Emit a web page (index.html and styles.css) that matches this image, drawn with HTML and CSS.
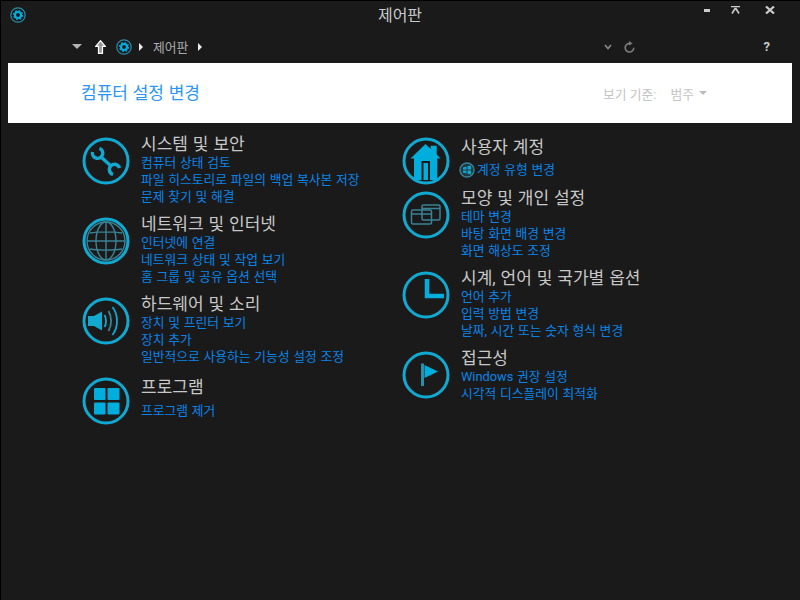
FILE: index.html
```html
<!DOCTYPE html>
<html lang="ko">
<head>
    <meta charset="UTF-8">
    <meta name="viewport" content="width=device-width, initial-scale=1.0">
    <title>제어판</title>
    <link rel="stylesheet" href="styles.css">
</head>
<body>
    <svg class="defs" width="0" height="0">
        <symbol id="gear" viewBox="0 0 16 16">
            <circle cx="8" cy="8" r="7.2" fill="none" stroke="#2a8fa8" stroke-width="1.2"/>
            <circle cx="8" cy="8" r="3" fill="none" stroke="#00aee0" stroke-width="2.2"/>
            <circle cx="8" cy="8" r="4.4" fill="none" stroke="#00aee0" stroke-width="1.4" stroke-dasharray="1.7 1.75"/>
        </symbol>
    </svg>

    <header class="titlebar">
        <svg class="app-icon"><use href="#gear"/></svg>
        <span class="titlebar-text">제어판</span>
        <div class="win-btns">
            <svg class="btn-min" width="6" height="3"><rect width="6" height="3" fill="#ccc"/></svg>
            <svg class="btn-max" width="9" height="8" viewBox="0 0 9 8"><path d="M0 .5h9M4.5 2 1 7.5M4.5 2 8 7.5" stroke="#ccc" stroke-width="1.6" fill="none"/></svg>
            <svg class="btn-close" width="10" height="8" viewBox="0 0 10 8"><path d="M1 .5 9 7.5M9 .5 1 7.5" stroke="#ccc" stroke-width="2.2" fill="none"/></svg>
        </div>
    </header>

    <nav class="navbar">
        <span class="caret-down"></span>
        <svg class="up-arrow" width="11" height="14" viewBox="0 0 11 14"><path d="M5.5 .7 10.3 6.3H7.5V13.3H3.5V6.3H.7Z" fill="#999" stroke="#fff" stroke-width="1.2"/></svg>
        <svg class="crumb-icon"><use href="#gear"/></svg>
        <span class="crumb-arrow"></span>
        <span class="crumb-text">제어판</span>
        <span class="crumb-arrow"></span>
        <div class="nav-right">
            <svg width="8" height="6" viewBox="0 0 8 6"><path d="M1 1 4 4.5 7 1" stroke="#8a8a8a" stroke-width="1.6" fill="none"/></svg>
            <svg class="refresh" width="11" height="12" viewBox="0 0 11 12"><path d="M6.8 2.6A4.3 4.3 0 1 0 9.8 6.8" stroke="#7c7c7c" stroke-width="1.6" fill="none"/><path d="M5 0 8.6 2.4 5 4.6Z" fill="#7c7c7c"/></svg>
            <span class="help">?</span>
        </div>
    </nav>

    <section class="banner">
        <h1>컴퓨터 설정 변경</h1>
        <div class="view-by">
            <span>보기 기준:</span>
            <span class="view-value">범주</span>
            <span class="caret-view"></span>
        </div>
    </section>

    <main class="panel">
        <div class="col">
            <div class="item">
                <svg class="ring" viewBox="0 0 48 48">
                    <circle class="ring-line" cx="24" cy="24" r="22"/>
                    <g fill="none" stroke="#12a9d0" stroke-width="3.4">
                        <path d="M10.500 15A5.200 5.200 0 1 0 17.500 11.300"/>
                        <path d="M19 20 29 29"/>
                        <path d="M37.500 31A5.200 5.200 0 1 0 31 37.500"/>
                    </g>
                </svg>
                <div class="item-body">
                    <h2>시스템 및 보안</h2>
                    <a>컴퓨터 상태 검토</a>
                    <a>파일 히스토리로 파일의 백업 복사본 저장</a>
                    <a>문제 찾기 및 해결</a>
                </div>
            </div>
            <div class="item">
                <svg class="ring" viewBox="0 0 48 48">
                    <circle class="ring-line" cx="24" cy="24" r="22"/>
                    <g fill="none" stroke="#3a8296" stroke-width="1.4">
                        <circle cx="24" cy="24" r="19"/>
                        <ellipse cx="24" cy="24" rx="10" ry="19"/>
                        <path d="M24 5V43M5 24H43M8 16C16 14.500 32 14.500 40 16M8 32C16 33.500 32 33.500 40 32"/>
                    </g>
                </svg>
                <div class="item-body">
                    <h2>네트워크 및 인터넷</h2>
                    <a>인터넷에 연결</a>
                    <a>네트워크 상태 및 작업 보기</a>
                    <a>홈 그룹 및 공유 옵션 선택</a>
                </div>
            </div>
            <div class="item">
                <svg class="ring" viewBox="0 0 48 48">
                    <circle class="ring-line" cx="24" cy="24" r="22"/>
                    <path d="M6 19H12L20 14.500V33.500L12 29H6Z" fill="#12a9d0"/>
                    <g fill="none" stroke-width="1.8">
                        <path d="M22.500 18C24.500 21 24.500 27 22.500 30" stroke="#12a9d0"/>
                        <path d="M26.500 14C30 20 30 28 26.500 34" stroke="#3a8296"/>
                        <path d="M30.500 10C36.500 18 36.500 30 30.500 38" stroke="#12a9d0"/>
                    </g>
                </svg>
                <div class="item-body">
                    <h2>하드웨어 및 소리</h2>
                    <a>장치 및 프린터 보기</a>
                    <a>장치 추가</a>
                    <a>일반적으로 사용하는 기능성 설정 조정</a>
                </div>
            </div>
            <div class="item item-single">
                <svg class="ring" viewBox="0 0 48 48">
                    <circle class="ring-line" cx="24" cy="24" r="22"/>
                    <g fill="#00aedd">
                        <rect x="12" y="11" width="11.500" height="12" rx="1"/>
                        <rect x="25.500" y="11" width="12" height="12" rx="1"/>
                        <rect x="12" y="25.500" width="11.500" height="12" rx="1"/>
                        <rect x="25.500" y="25.500" width="12" height="12" rx="1"/>
                    </g>
                </svg>
                <div class="item-body">
                    <h2>프로그램</h2>
                    <a>프로그램 제거</a>
                </div>
            </div>
        </div>

        <div class="col">
            <div class="item item-single item-short">
                <svg class="ring" viewBox="0 0 48 48">
                    <circle class="ring-line" cx="24" cy="24" r="22"/>
                    <path fill-rule="evenodd" fill="#00aedd" d="M23.500 7 28.700 12V8.700H34.700V17.500L38.500 21.500H35.300V43H12V21.500H8.500ZM19.500 24V43H28V24Z"/>
                    <rect x="21.500" y="26" width="4.500" height="17" fill="#00aedd"/>
                </svg>
                <div class="item-body">
                    <h2>사용자 계정</h2>
                    <a class="link-shield">
                        <svg class="win-badge" width="16" height="16" viewBox="0 0 16 16">
                            <circle cx="8" cy="8" r="7" fill="#1d3a44" stroke="#3a8296" stroke-width="1.4"/>
                            <path d="M4 5.500 7.500 4.500V7.500H4ZM8.500 4.300 12 3.500V7.500H8.500ZM4 8.500H7.500V11.500L4 10.500ZM8.500 8.500H12V12.500L8.500 11.700Z" fill="#14a5cc"/>
                        </svg>계정 유형 변경
                    </a>
                </div>
            </div>
            <div class="item">
                <svg class="ring" viewBox="0 0 48 48">
                    <circle class="ring-line" cx="24" cy="24" r="22"/>
                    <g fill="none" stroke="#3a8296" stroke-width="1.5">
                        <rect x="20" y="14" width="18" height="15" rx="1.500"/>
                        <rect x="9.500" y="19" width="20" height="14" rx="1.500"/>
                        <path d="M9.500 23H29.500M20 17.500H38"/>
                    </g>
                </svg>
                <div class="item-body">
                    <h2>모양 및 개인 설정</h2>
                    <a>테마 변경</a>
                    <a>바탕 화면 배경 변경</a>
                    <a>화면 해상도 조정</a>
                </div>
            </div>
            <div class="item">
                <svg class="ring" viewBox="0 0 48 48">
                    <circle class="ring-line" cx="24" cy="24" r="22"/>
                    <path d="M25 8V25H42" fill="none" stroke="#00aedd" stroke-width="4.500"/>
                </svg>
                <div class="item-body">
                    <h2>시계, 언어 및 국가별 옵션</h2>
                    <a>언어 추가</a>
                    <a>입력 방법 변경</a>
                    <a>날짜, 시간 또는 숫자 형식 변경</a>
                </div>
            </div>
            <div class="item">
                <svg class="ring" viewBox="0 0 48 48">
                    <circle class="ring-line" cx="24" cy="24" r="22"/>
                    <rect x="19" y="12.500" width="3" height="22.500" fill="#2a8fa8"/>
                    <path d="M22.500 14 36 20.500 22.500 27Z" fill="#00aedd"/>
                </svg>
                <div class="item-body">
                    <h2>접근성</h2>
                    <a>Windows 권장 설정</a>
                    <a>시각적 디스플레이 최적화</a>
                </div>
            </div>
        </div>
    </main>
</body>
</html>
```
FILE: styles.css
```css
html, body {
    margin: 0;
    height: 100%;
}
body {
    background: #1a1a1a;
    box-shadow: inset 1px 1px 0 #000;
    font-family: Roboto, "Noto Sans CJK KR", sans-serif;
    overflow: hidden;
}
.defs { display: block; height: 0; }
.titlebar {
    height: 30px;
    padding-bottom: 3px;
    display: flex;
    align-items: center;
    justify-content: center;
    position: relative;
    box-sizing: border-box;
}
.app-icon {
    position: absolute;
    left: 10px;
    top: 7px;
    width: 16px;
    height: 16px;
}
.titlebar-text {
    color: #c8c8c8;
    font-size: 16px;
}
.win-btns {
    position: absolute;
    right: 0;
    top: 6px;
    display: flex;
    align-items: flex-start;
}
.btn-min { margin: 3px 0 0 0; }
.btn-max { margin: 0 0 0 21px; }
.btn-close { margin: 0 25px 0 25px; }

.navbar {
    height: 33px;
    display: flex;
    align-items: center;
    padding-left: 72px;
    padding-right: 30px;
}
.caret-down {
    border-left: 5px solid transparent;
    border-right: 5px solid transparent;
    border-top: 5px solid #b4b4b4;
}
.up-arrow { margin-left: 13px; }
.crumb-icon {
    width: 16px;
    height: 16px;
    margin-left: 10px;
}
.crumb-arrow {
    border-top: 4px solid transparent;
    border-bottom: 4px solid transparent;
    border-left: 4px solid #eee;
    margin-left: 7px;
}
.crumb-text {
    color: #aaa;
    font-size: 12.8px;
    margin-left: 10px;
}
.crumb-text + .crumb-arrow { margin-left: 10px; }
.nav-right {
    margin-left: auto;
    display: flex;
    align-items: center;
}
.refresh { margin-left: 12px; }
.help {
    color: #ccc;
    font-size: 13px;
    font-weight: 700;
    margin-left: 129px;
}

.banner {
    background: #fff;
    margin: 0 8px;
    height: 60px;
    display: flex;
    align-items: center;
    padding: 0 85px 0 73px;
}
.banner h1 {
    margin: 0 0 4px;
    color: #2b95f5;
    font-size: 17px;
    font-weight: 400;
    word-spacing: .5px;
}
.view-by {
    margin-left: auto;
    display: flex;
    align-items: center;
    color: #c4c4c4;
    font-size: 12.8px;
}
.view-value { margin-left: 14px; }
.caret-view {
    border-left: 4px solid transparent;
    border-right: 4px solid transparent;
    border-top: 4px solid #bbb;
    margin-left: 5px;
}

.panel {
    display: flex;
    padding: 14px 0 0 82px;
}
.col { width: 320px; }
.item {
    display: flex;
    gap: 11px;
    height: 80px;
}
.item-short { height: 54px; }
.ring {
    width: 48px;
    height: 48px;
    flex: none;
}
.ring-line {
    fill: none;
    stroke: #12a9d0;
    stroke-width: 3;
}
.item-body {
    display: flex;
    flex-direction: column;
    margin-top: -3px;
}
.item-body h2 {
    margin: 0;
    color: #c8c8c8;
    font-size: 17px;
    font-weight: 400;
    line-height: 20px;
    word-spacing: .7px;
}
.item-body a {
    color: #0a84e8;
    font-size: 12.8px;
    line-height: 17px;
    word-spacing: .5px;
}
.item-single .item-body { margin-top: 0; }
.item-single .item-body a { margin-top: 5px; }
.item-single .item-body .link-shield {
    display: flex;
    align-items: center;
    margin: 4px 0 0 -2px;
}
.win-badge { margin-right: 2px; }
```
